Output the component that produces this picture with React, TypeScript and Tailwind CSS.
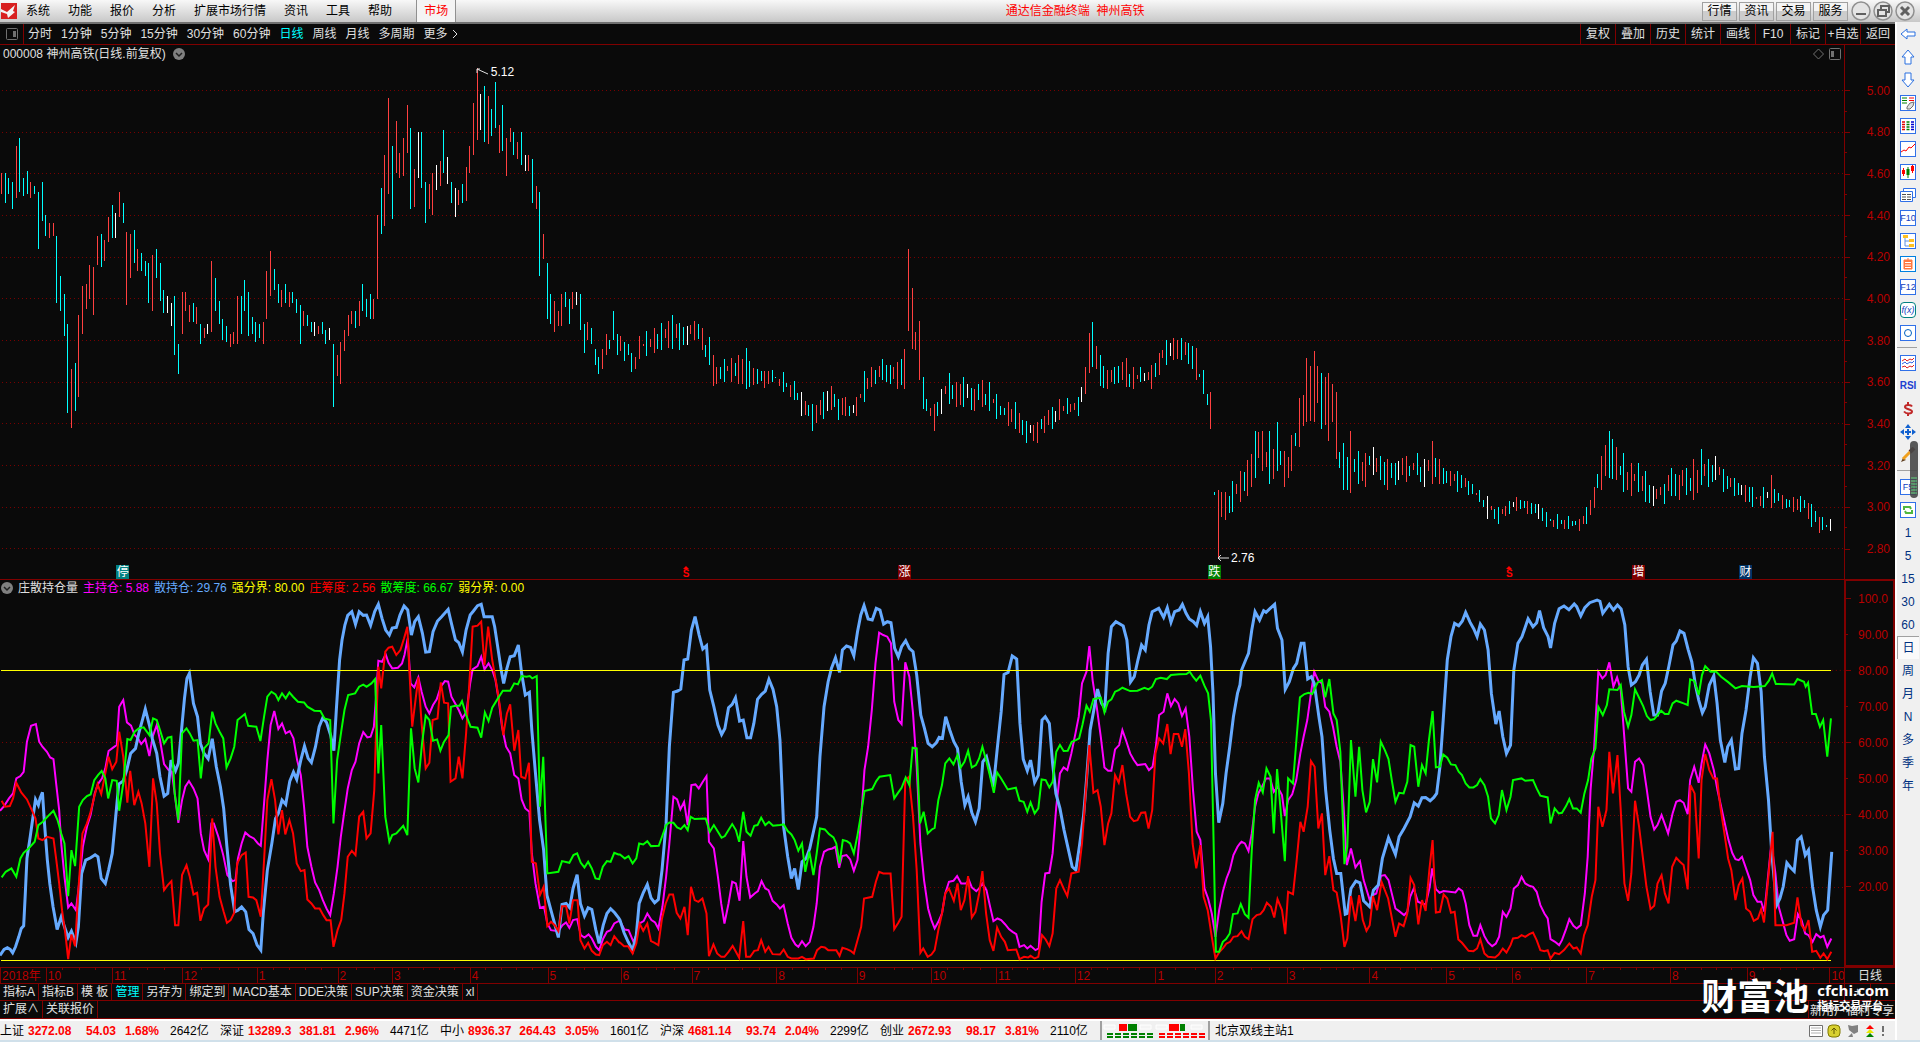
import type { ReactNode } from "react";

type Bar = { x: number; top: number; bottom: number; color: string };

const menus = ["系统", "功能", "报价", "分析", "扩展市场行情", "资讯", "工具", "帮助"];
const title_buttons = ["行情", "资讯", "交易", "服务"];
const periods = ["分时", "1分钟", "5分钟", "15分钟", "30分钟", "60分钟", "日线", "周线", "月线", "多周期"];
const chart_tools = ["复权", "叠加", "历史", "统计", "画线", "F10", "标记", "+自选", "返回"];
const price_labels = ["5.00", "4.80", "4.60", "4.40", "4.20", "4.00", "3.80", "3.60", "3.40", "3.20", "3.00", "2.80"];
const percent_labels = ["100.0", "90.00", "80.00", "70.00", "60.00", "50.00", "40.00", "30.00", "20.00"];
const sub_tabs = ["指标A", "指标B", "模 板", "管理", "另存为", "绑定到", "MACD基本", "DDE决策", "SUP决策", "资金决策", "xl"];
const side_periods = ["1", "5", "15", "30", "60", "日", "周", "月", "N", "多", "季", "年"];

const months = [
    { label: "2018年", days: 45 }, { label: "10", days: 66 }, { label: "11", days: 70 }, { label: "12", days: 75 },
    { label: "1", days: 81 }, { label: "2", days: 54 }, { label: "3", days: 78 }, { label: "4", days: 78 },
    { label: "5", days: 73 }, { label: "6", days: 71 }, { label: "7", days: 85 }, { label: "8", days: 81 },
    { label: "9", days: 74 }, { label: "10", days: 65 }, { label: "11", days: 79 }, { label: "12", days: 81 },
    { label: "1", days: 59 }, { label: "2", days: 72 }, { label: "3", days: 83 }, { label: "4", days: 77 },
    { label: "5", days: 66 }, { label: "6", days: 74 }, { label: "7", days: 84 }, { label: "8", days: 77 },
    { label: "9", days: 83 }, { label: "10", days: 13 },
];

const readings = [
    { text: "主持仓: 5.88", style: "text-[#ff00ff]" },
    { text: "散持仓: 29.76", style: "text-[#66aaff]" },
    { text: "强分界: 80.00", style: "text-[#ffff00]" },
    { text: "庄筹度: 2.56", style: "text-[#ff0000]" },
    { text: "散筹度: 66.67", style: "text-[#00ff00]" },
    { text: "弱分界: 0.00", style: "text-[#ffff00]" },
];

const indices = [
    { name: "上证", price: "3272.08", change: "54.03", rate: "1.68%", volume: "2642亿" },
    { name: "深证", price: "13289.3", change: "381.81", rate: "2.96%", volume: "4471亿" },
    { name: "中小", price: "8936.37", change: "264.43", rate: "3.05%", volume: "1601亿" },
    { name: "沪深", price: "4681.14", change: "93.74", rate: "2.04%", volume: "2299亿" },
    { name: "创业", price: "2672.93", change: "98.17", rate: "3.81%", volume: "2110亿" },
];

// one entry per trading day: r = up, c = down, w = flat, then high-low in thirds of a pixel
const first_bars = `r369-432 c369-459 c384-432 c396-477 r288-444 c264-426 c384-438 c363-432 r396-444 c408-432
c426-597 c396-513 c495-558 r519-564 r519-558 c558-759 c678-783 c732-858 c822-1089 r957-1134
c939-1083 r795-1041 r708-852 r702-777 r645-747 r651-795 r558-645 c552-651 r570-633 r501-576
c465-564 w489-564 r426-501 c459-519 r546-765 r552-684 c540-639 r597-663 c609-663 c633-678
c639-759 r615-783 c597-684 c639-753 c720-789 w738-789 w759-828 c738-915 c882-972 r726-852
r726-783 r765-816 c759-816 r771-822 c822-882 r834-864 w822-852 r633-846 c684-783 c753-822
c807-870 c828-876 r852-891 r846-882 r738-882 c738-852 c690-783 c726-858 c801-852 c816-876
c822-864 r816-882 r663-807 r603-738 c657-720 c702-759 r720-771 c702-759 r726-771 c726-759
c747-789 c765-882 r783-828 c795-828 c816-846 w816-858 r828-852 c816-852 c840-882 w834-870
c882-1071 r915-978 r876-1002 r840-903 r795-858 r783-822 c783-834 r753-828 c702-783 c747-801
c732-807 r747-807 r495-747 c414-552 r315-528 r144-432 c288-507 r213-369 r309-384 r264-378
r165-309 c234-477 r357-471 w246-384 c246-414 c396-519 r402-477 r369-495 w345-420 r333-408
c240-369 w321-402 c396-459 w414-501 r420-465 c402-459 r351-453 r288-369 r159-315 r54-270
w132-240 c108-276 r138-282 c177-258 c96-234 r225-309 c165-303 r264-378 r234-276 c246-315
r276-327 c246-345 w315-363 r315-363 c327-459 r408-477 c426-678 r552-627 c639-807 c732-822
r753-846 r783-828 r732-828 c726-771 c747-822 r726-777 w726-765 c732-840 c822-909 r816-870
c834-882 c897-945 c921-972 r897-957 r852-915 c870-897 c783-870 c852-915 r858-903 c876-933
c882-915 c909-966 r921-957 r858-927`;

// x, high, low of the trading range, thinned out to its turning points
const later_range = `523,274,293 528,270,291 534,268,288 540,264,286 546,262,284 550,257,285 556,264,286 562,266,282
568,262,278 574,268,286 578,275,298 583,290,315 590,293,312 597,292,312 603,290,314 609,284,318 612,295,316
618,301,314 625,303,317 632,302,312 640,304,320 648,311,327 656,320,340 664,330,352 672,320,342 678,315,335
685,326,343 692,324,340 700,324,340 706,303,328 713,300,316 720,293,310 728,298,314 734,296,318 738,285,318
740,245,305 743,203,270 746,235,285 750,262,310 754,308,334 762,330,352 768,318,338 774,305,330 780,312,332
788,308,332 795,318,336 802,310,332 808,312,336 815,322,342 822,328,348 830,328,350 838,344,362 846,345,362
852,340,354 858,332,350 864,326,343 872,325,338 880,324,340 886,300,322 890,272,305 893,263,300 898,290,315
905,302,318 912,300,314 920,292,316 925,300,318 932,300,312 940,298,318 946,288,306 952,278,298 958,276,294
964,276,294 970,280,297 976,284,310 982,302,322 989,320,350 992,402,404 995,400,455 998,402,422 1002,402,425
1008,393,418 1014,385,410 1020,376,405 1026,352,390 1032,352,385 1038,352,395 1043,345,385 1050,368,398
1056,355,385 1062,325,365 1068,292,345 1074,287,345 1080,305,350 1086,305,360 1090,320,375 1096,362,400
1102,352,403 1108,368,395 1114,370,398 1120,365,388 1126,372,392 1132,375,400 1140,378,396 1148,372,394
1156,370,388 1162,375,398 1170,360,395 1176,375,395 1184,385,397 1192,385,402 1200,393,404 1208,400,410
1216,405,424 1224,414,428 1232,409,420 1240,406,417 1248,409,420 1256,412,424 1264,418,430 1272,420,432
1280,421,432 1290,424,434 1296,414,428 1302,398,415 1308,372,400 1314,352,390 1320,365,392 1326,370,402
1332,378,405 1338,378,402 1344,385,410 1350,397,413 1358,395,412 1364,382,405 1370,388,408 1376,382,404
1383,375,408 1390,367,396 1396,375,398 1402,372,392 1408,383,402 1416,390,405 1424,396,410 1432,398,414
1440,398,415 1448,388,415 1456,404,416 1464,406,418 1472,405,418 1480,412,430 1486,422,435 1496,424,434`;

const RANGE_SCALE = 1.2245;
const BAR_STEP = 3.687;
const BAR_COUNT = 497;

function buildBars(): Bar[] {
    const bars: Bar[] = first_bars.split(/\s+/).map((entry, i) => {
        const [top, bottom] = entry.slice(1).split("-").map(Number);
        return { x: 1.5 + i * BAR_STEP, top, bottom, color: entry[0] };
    });

    const knots = later_range.split(/\s+/).map((k) => k.split(",").map(Number));
    for (let i = bars.length; i < BAR_COUNT; i++) {
        const x = 1.5 + i * BAR_STEP;
        const rx = x / RANGE_SCALE;
        const found = knots.findIndex((n) => n[0] > rx);
        const k = found < 0 ? knots.length - 1 : Math.max(1, found);
        const [a, b] = [knots[k - 1], knots[k]];
        const nearest = rx - a[0] < b[0] - rx ? a : b;
        const snap = Math.abs(rx - nearest[0]) <= 1.5;
        const t = Math.min(1, Math.max(0, (rx - a[0]) / (b[0] - a[0])));
        const hi = snap ? nearest[1] : a[1] + (b[1] - a[1]) * t;
        const lo = snap ? nearest[2] : a[2] + (b[2] - a[2]) * t;
        const range = lo - hi;
        const cutTop = snap ? 0 : (((i * 37) % 19) / 19) * 0.5 * range;
        const cutBottom = snap ? 0 : (((i * 53) % 23) / 23) * 0.5 * range;
        const roll = (i * 71) % 31;
        const falling = b[1] > a[1];
        let color = roll < 3 && range < 24 ? "w" : roll < (falling ? 11 : 21) ? "r" : "c";
        if (range > 48) color = "r";
        bars.push({
            x,
            top: ((hi + cutTop) * RANGE_SCALE - 50) * 3,
            bottom: ((lo - cutBottom) * RANGE_SCALE - 50) * 3,
            color,
        });
    }
    return bars;
}

const bars = buildBars();

function barPath(color: string) {
    return bars
        .filter((b) => b.color === color)
        .map((b) => `M${Math.floor(b.x) + 0.5} ${Math.round(b.top)}V${Math.round(b.bottom)}`)
        .join("");
}

// each curve is kept in three stretches, one for each third of the time axis
const stretches = [
    { offset: 0, ratio: 1 },
    { offset: 1519, ratio: 1 },
    { offset: 3038, ratio: 0.9687 },
];

function joinCurve(parts: string[]) {
    return parts
        .map((part, i) =>
            part.trim().split(/\s+/).map((p) => {
                const [x, y] = p.split(",").map(Number);
                return `${Math.round(x * stretches[i].ratio + stretches[i].offset)},${y}`;
            }).join(" "))
        .join(" ");
}

const blue_curve = joinCurve([
    `0,1186 10,1168 18,1163 25,1168 31,1178 38,1160 46,1130 52,1105 58,1097 62,1000 66,895 74,830 82,760 87,718 94,735 98,715 104,697 109,790 116,900 122,970 130,1040 140,1108 150,1070 158,1100 167,1132 175,1113 186,1148 192,1100 200,940 210,900 222,893 233,884 240,890 248,955 258,970 266,930 275,880 285,750 291,672 302,663 311,628 320,580 332,565 340,520 350,475 356,447 366,495 373,535 384,580 392,650 402,708 411,700 419,600 430,632 437,610 444,520 452,415 458,355 464,340 474,430 484,470 491,550 500,580 510,596 520,536 530,620 540,680 548,745 556,860 565,975 575,1055 583,1050 592,1040 602,1055 610,1108 620,1120 630,1155 639,1170 645,1060 655,930 666,850 675,775 682,760 691,720 700,733 710,663 719,636 727,658 737,600 746,558 755,595 763,607 773,560 782,500 791,473 800,487 810,525 818,572 824,450 832,300 838,240 845,195 852,166 862,155 871,193 880,155 890,166 898,165 908,196 918,155 927,133 936,175 945,210 954,225 961,204 971,202 980,165 990,138 999,150 1008,225 1016,185 1025,170 1035,220 1043,276 1052,275 1061,215 1072,183 1082,170 1098,148 1106,190 1116,240 1124,248 1133,276 1142,210 1152,165 1160,153 1170,137 1179,133 1186,170 1206,170 1212,200 1220,265 1228,330 1234,370 1242,325 1250,290 1260,287 1270,255 1278,340 1287,405 1297,397 1303,510 1312,640 1322,780 1332,870 1340,1005 1352,1060 1368,1132 1377,1033 1387,1030 1396,1043 1404,985 1414,944 1422,1030 1432,1067 1441,1043 1450,1048 1460,1110 1468,1150 1478,1095 1487,1060 1496,1046 1506,1058 1516,1074`,
    `0,1080 10,1118 20,1145 31,1170 40,1125 47,1030 57,998 67,973 76,1013 85,1028 94,1018 103,930 113,790 121,560 131,397 141,393 149,387 157,300 166,297 175,210 184,170 194,225 203,267 212,257 220,390 230,440 240,495 249,523 257,505 266,443 275,433 283,413 293,483 302,480 311,533 320,533 328,490 337,418 347,403 356,393 365,358 375,388 384,440 392,540 401,800 411,890 420,955 428,925 437,988 446,905 456,895 465,865 474,815 482,770 490,590 500,440 510,365 518,325 528,293 538,337 545,270 555,258 565,262 573,287 582,215 590,165 598,137 608,177 618,180 628,145 637,150 646,192 655,185 664,188 673,265 682,290 690,260 700,242 709,265 718,275 727,345 737,465 746,505 755,550 765,560 775,548 782,532 790,535 798,470 808,510 818,545 827,565 836,665 845,735 853,710 862,757 871,785 880,745 889,605 898,590 906,630 915,680 924,570 934,455 941,343 951,337 961,288 972,297 980,490 988,597 998,632 1006,600 1016,667 1025,645 1034,480 1042,470 1052,490 1060,610 1068,700 1078,745 1088,810 1098,865 1108,920 1117,930 1126,855 1136,765 1143,660 1152,510 1161,450 1170,387 1180,430 1188,445 1196,280 1204,200 1215,185 1225,192 1233,198 1242,240 1251,366 1260,350 1269,300 1278,255 1287,270 1296,195 1304,155 1320,145 1332,172 1341,143 1350,187 1359,155 1370,150 1378,133 1387,160 1395,177 1405,185 1413,196 1422,155 1432,190 1440,170 1447,260 1453,400 1459,640 1467,788 1477,730 1485,640 1494,560 1503,470 1513,400`,
    `0,375 4,330 14,300 22,280 30,210 38,155 50,180 60,152 66,157 76,145 88,133 95,205 106,240 115,388 125,365 135,325 144,310 155,250 162,250 171,357 181,350 188,370 200,475 208,530 217,690 227,810 236,895 245,940 255,940 266,1062 272,1060 281,985 293,963 303,968 313,1022 328,1040 338,990 350,975 360,895 376,833 393,883 403,830 415,805 430,770 441,728 451,738 460,713 470,712 481,722 490,712 498,700 506,620 514,480 524,300 534,230 543,190 553,197 563,183 571,157 582,187 592,207 600,230 608,192 618,210 628,270 636,400 647,492 656,453 665,530 674,580 684,555 693,330 703,250 713,230 729,176 741,200 750,188 758,152 768,203 779,230 786,264 796,190 807,146 820,138 832,149 845,132 852,140 862,168 872,143 885,128 903,120 910,124 918,160 934,133 945,150 955,135 964,147 973,195 982,320 990,375 1000,365 1010,345 1018,315 1028,298 1037,395 1047,465 1056,465 1066,393 1076,370 1085,318 1095,255 1104,243 1113,213 1123,220 1133,268 1143,305 1152,375 1160,420 1170,458 1177,440 1187,375 1198,347 1207,430 1215,540 1226,607 1234,560 1243,540 1253,627 1262,625 1270,520 1280,450 1290,350 1299,293 1309,310 1318,395 1327,590 1337,720 1345,880 1357,1035 1366,1015 1374,980 1383,908 1393,922 1402,933 1410,840 1419,830 1430,885 1438,870 1448,980 1458,1050 1468,1100 1476,1065 1487,1050 1492,960 1497,875`,
]);

const magenta_curve = joinCurve([
    `0,752 10,738 22,715 32,700 40,655 50,648 58,635 66,545 76,497 88,492 96,545 104,560 115,575 123,592 131,597 138,675 145,750 150,850 158,950 167,1042 175,1030 186,1050 193,980 203,860 213,800 222,765 232,700 240,672 250,655 258,625 266,573 278,562 286,555 292,440 302,420 311,487 321,497 330,525 338,535 346,552 356,537 366,588 374,530 384,495 392,540 402,612 413,630 421,635 428,700 437,788 446,720 454,680 463,663 474,685 484,715 492,820 500,870 510,897 518,790 524,790 535,830 547,885 557,945 570,963 577,960 583,895 592,850 601,817 611,828 622,835 632,850 639,857 647,730 655,600 663,495 672,453 682,507 691,490 700,520 710,513 719,535 728,600 737,645 745,740 753,860 763,920 772,967 782,990 791,1020 800,1045 809,1065 818,1000 827,920 835,830 843,760 852,685 862,630 871,605 880,550 890,516 900,532 908,530 916,500 922,400 927,302 936,305 945,283 952,308 961,325 975,323 985,310 991,285 999,235 1006,370 1015,382 1025,352 1033,395 1043,440 1052,460 1061,435 1070,418 1080,380 1090,363 1098,365 1106,410 1116,432 1124,450 1133,475 1143,455 1152,370 1158,328 1170,318 1179,290 1187,328 1197,310 1206,330 1214,360 1222,420 1230,500 1240,560 1250,580 1260,645 1270,655 1278,718 1287,745 1297,755 1303,880 1312,970 1323,1043 1333,1040 1341,1090 1350,1110 1368,1113 1378,1095 1387,1087 1395,1103 1404,1080 1414,1077 1423,1125 1432,1132 1442,1123 1450,1135 1460,1160 1468,1170 1478,1135 1487,1115 1496,1110 1505,1090 1515,1083`,
    `0,1083 11,1108 21,1110 33,1145 40,1125 48,1090 58,1083 67,1060 77,1080 86,1087 94,1105 104,1040 113,950 121,850 131,710 140,718 148,748 157,726 166,795 175,675 185,673 193,685 203,665 212,648 218,845 230,865 240,950 248,1030 256,1090 266,1030 275,965 284,970 293,1022 302,843 310,950 319,1012 330,1000 338,993 347,963 356,985 364,990 374,1022 384,1033 392,1045 401,1035 411,1090 420,1133 430,1153 437,1160 446,1143 455,1158 465,1145 474,1100 482,1030 490,920 500,875 510,868 520,865 528,860 537,923 544,888 555,885 564,898 573,932 582,900 590,790 599,630 608,560 617,450 626,310 635,218 645,225 655,230 664,250 672,425 682,480 690,492 699,307 709,350 718,460 727,620 736,850 745,960 755,1045 763,1080 771,1105 780,1085 789,1060 797,1000 806,965 817,962 826,948 836,970 848,970 855,960 862,982 873,993 880,985 888,970 898,990 906,1035 915,1083 925,1075 934,1080 944,1093 953,1107 962,1115 971,1122 979,1160 990,1155 998,1165 1006,1157 1018,1170 1026,1165 1033,1025 1042,940 1052,938 1060,880 1069,740 1078,640 1087,622 1096,630 1106,580 1116,520 1124,470 1132,370 1143,335 1150,258 1158,360 1168,440 1178,530 1187,622 1196,632 1204,632 1213,568 1223,555 1231,510 1241,545 1250,580 1259,600 1268,615 1287,612 1296,630 1305,620 1313,560 1321,465 1332,455 1341,400 1350,438 1359,417 1368,430 1377,468 1386,445 1395,530 1404,690 1413,815 1422,840 1432,985 1441,1015 1450,1060 1459,1130 1468,1050 1477,995 1486,955 1494,930 1503,885 1513,860`,
    `0,850 4,845 12,850 22,873 30,820 38,740 46,700 56,680 66,655 76,655 86,695 95,680 106,705 114,768 122,720 132,703 142,660 153,580 161,530 170,480 180,400 188,335 198,362 208,370 216,440 226,455 235,500 245,560 254,605 262,740 270,915 281,865 292,922 303,903 313,960 328,1020 337,1005 345,1000 357,947 366,945 376,960 393,1045 403,1053 415,1065 423,1055 430,1010 440,985 450,1025 460,1030 470,1033 480,980 486,925 496,987 505,998 515,993 545,997 553,985 563,993 571,1030 580,1095 590,1127 600,1127 608,1095 618,1128 628,1147 638,1158 647,1150 656,1130 665,1055 674,1070 684,1045 693,985 703,975 712,950 722,970 732,977 741,980 750,995 760,1035 770,1060 778,1075 786,1137 797,1145 807,1155 815,1140 825,1107 833,1077 843,1097 852,1105 862,1095 872,1000 880,890 887,690 896,560 906,335 917,355 925,345 934,307 945,380 954,352 963,390 971,520 982,685 990,695 999,605 1010,595 1020,615 1029,690 1038,770 1048,808 1056,795 1066,765 1076,795 1083,820 1094,760 1104,725 1113,720 1122,728 1132,762 1139,660 1149,620 1160,668 1168,610 1177,553 1187,580 1198,630 1208,690 1217,740 1226,790 1236,840 1245,878 1253,897 1262,900 1270,890 1280,925 1290,960 1299,1005 1309,1025 1318,1025 1327,1055 1335,960 1344,850 1354,940 1363,1040 1372,1080 1382,1125 1391,1142 1402,1137 1411,1062 1420,1080 1430,1120 1438,1125 1448,1145 1458,1122 1468,1132 1476,1127 1486,1160 1496,1135`,
]);

const red_curve = joinCurve([
    `4,722 12,740 24,738 32,715 40,668 52,697 66,718 76,745 87,775 94,835 104,840 116,830 131,835 138,900 145,970 152,1050 160,1120 167,1197 175,1123 184,1158 192,990 202,820 213,790 221,760 230,715 239,672 248,702 258,640 266,590 275,627 285,605 292,515 302,590 312,728 319,632 329,735 339,695 347,730 356,790 366,920 375,655 384,730 392,880 402,990 411,975 420,963 429,1095 437,1095 446,945 457,915 465,950 474,1003 483,998 491,1082 500,1045 510,1033 520,775 528,920 538,1010 548,1055 556,1088 565,1080 574,1058 581,910 592,885 602,877 609,1010 620,1012 628,1020 639,1070 647,900 655,720 665,657 674,720 682,823 691,750 699,823 709,780 718,820 727,910 737,933 746,930 753,1018 763,1030 772,1045 783,1045 792,1065 800,1080 810,1080 817,1160 827,1110 836,1080 844,1000 852,890 862,872 871,885 880,770 890,755 898,835 908,820 917,690 922,490 927,320 934,385 944,275 952,263 961,260 971,285 981,270 990,235 998,200 1003,330 1010,500 1018,420 1025,352 1033,490 1043,625 1052,608 1060,480 1072,475 1080,367 1088,428 1098,430 1104,665 1116,655 1124,590 1133,655 1142,520 1152,330 1158,200 1170,197 1179,185 1187,315 1196,200 1206,300 1216,370 1225,440 1233,525 1242,460 1250,433 1260,572 1270,510 1277,650 1287,655 1296,608 1303,905 1313,910 1323,1005 1332,980 1341,1098 1350,1085 1359,1095 1368,1113 1377,1038 1387,1038 1395,1090 1404,1020 1415,1020 1422,1140 1432,1165 1441,1148 1450,1172 1460,1183 1468,1185 1477,1155 1487,1145 1496,1155 1505,1128 1517,1147`,
    `0,1147 10,1158 20,1158 31,1180 40,1150 48,1090 57,1112 67,1090 76,1143 85,1148 94,1155 103,1075 112,1030 121,1003 130,1003 139,1058 148,1075 158,1040 166,1125 174,980 183,1020 192,1025 202,1015 212,1060 218,1188 229,1153 238,1180 248,1190 256,1190 266,1175 276,1157 284,1175 292,1193 302,1083 309,1190 319,1190 329,1172 338,1170 346,1140 356,1175 364,1160 374,1182 392,1183 401,1168 411,1190 420,1195 437,1195 446,1190 455,1197 475,1195 483,1170 493,1160 502,1162 510,1170 530,1170 538,1187 545,1163 556,1167 565,1172 573,1180 582,1140 591,1100 598,1015 618,1010 627,965 635,935 645,940 663,940 672,1107 682,1088 690,1070 699,660 708,650 718,770 727,930 736,1178 743,1165 754,1190 763,1183 771,1170 780,1110 789,1060 797,1000 806,985 818,1022 827,970 835,1050 844,1020 853,948 862,1072 871,1055 880,1000 888,933 897,1060 906,1140 915,1172 924,1102 934,1130 943,1145 950,1170 971,1168 979,1197 990,1190 1000,1192 1006,1187 1016,1195 1025,1190 1034,1125 1043,1138 1052,1158 1060,1120 1069,985 1078,960 1087,985 1096,1008 1106,940 1124,935 1132,850 1141,700 1150,555 1160,698 1170,690 1178,740 1187,855 1196,790 1204,760 1213,645 1222,668 1231,615 1240,700 1250,770 1259,783 1268,780 1277,758 1287,757 1295,805 1304,750 1312,580 1321,535 1331,550 1341,492 1349,582 1357,522 1368,522 1377,560 1385,507 1394,640 1403,850 1412,925 1422,855 1430,1010 1440,1050 1450,1130 1459,1195 1469,1175 1478,1163 1486,1150 1495,1145 1503,1130 1513,1128`,
    `4,1113 12,1130 22,1137 32,1077 42,1065 52,1062 60,1050 68,1028 78,1040 87,1072 95,1017 106,1050 115,1122 122,995 134,1002 144,900 153,785 161,815 171,740 180,603 189,620 198,805 207,760 216,945 226,888 236,990 245,997 254,1060 264,1160 272,1135 281,1008 292,1083 301,1005 311,1080 320,1112 328,1095 337,1008 347,1050 358,965 375,1015 393,1130 403,1090 414,1098 423,1060 431,953 441,975 451,1093 460,1020 470,1052 479,930 487,840 496,1057 506,1055 515,1003 524,1015 534,1058 543,1055 552,1138 562,1148 578,1172 590,1173 600,1165 608,1138 618,1180 628,1190 645,1192 655,1183 665,1165 674,1177 684,1155 691,1135 703,1133 712,1125 722,1130 732,1122 741,1117 750,1140 760,1170 770,1173 778,1170 786,1195 796,1178 807,1182 820,1170 833,1150 843,1165 852,1162 862,1180 870,1125 880,1095 890,1010 899,960 906,740 917,800 927,750 934,575 944,700 955,585 963,750 972,970 982,1022 990,940 999,722 1010,800 1020,900 1028,980 1038,1047 1048,1037 1056,970 1066,945 1075,1000 1084,1030 1093,920 1104,893 1113,905 1122,915 1132,988 1140,675 1150,700 1160,895 1168,660 1177,582 1187,630 1197,655 1207,655 1215,740 1225,820 1235,895 1243,930 1253,1020 1262,975 1271,955 1280,1045 1290,1055 1300,1082 1310,1075 1318,1047 1326,1087 1336,960 1347,815 1354,1095 1382,1095 1402,1088 1410,1012 1420,1095 1429,1110 1438,1080 1447,1175 1458,1172 1468,1193 1476,1180 1486,1197 1496,1175`,
]);

const green_curve = joinCurve([
    `4,952 14,935 28,925 40,950 50,895 58,878 70,865 85,845 94,795 105,785 120,765 131,752 141,780 150,820 158,850 167,1008 175,870 184,918 194,740 203,720 213,708 222,703 231,660 240,645 249,633 258,655 265,715 275,660 286,662 292,752 302,670 312,537 320,540 330,515 340,505 352,502 366,525 375,475 384,480 392,510 402,550 411,533 420,530 428,700 437,780 446,520 457,505 465,520 474,542 484,540 492,655 500,565 511,550 520,455 528,490 538,515 547,535 555,622 565,595 574,560 582,480 592,470 600,462 608,497 628,500 638,543 647,470 655,410 665,395 675,403 682,420 691,400 700,415 709,397 718,410 730,425 745,427 753,440 770,452 785,453 795,475 809,480 817,790 826,600 836,515 844,450 853,405 870,400 880,380 890,374 898,380 910,370 919,357 927,640 934,495 944,770 954,845 961,825 971,820 988,797 998,825 1007,505 1016,625 1025,667 1034,550 1043,467 1052,480 1061,542 1071,538 1079,572 1088,545 1099,525 1105,440 1116,437 1126,437 1132,423 1142,465 1153,500 1170,503 1179,533 1188,457 1197,483 1206,443 1220,415 1232,392 1250,392 1260,370 1269,373 1278,348 1290,350 1298,348 1304,355 1315,348 1323,740 1331,590 1341,940 1368,935 1377,903 1395,908 1405,885 1414,880 1423,908 1432,922 1441,905 1450,925 1459,955 1468,957 1477,920 1487,903 1496,905 1505,878 1515,883`,
    `0,883 12,895 21,888 31,910 40,895 47,850 57,853 67,843 76,858 95,857 103,830 113,795 121,787 131,788 140,802 149,807 158,795 166,810 173,770 183,777 210,775 220,815 230,795 240,815 249,833 257,828 266,810 275,792 284,810 292,845 302,755 310,815 320,827 329,797 337,795 346,773 356,795 365,785 375,797 392,795 401,793 411,813 420,823 428,840 437,872 446,850 454,935 464,875 474,945 482,880 490,805 502,808 512,822 523,832 530,850 538,910 546,840 556,843 564,850 573,880 582,825 591,760 599,693 618,687 628,663 636,650 662,645 672,715 682,697 690,683 700,652 709,675 717,563 727,565 735,790 744,755 754,820 764,808 771,803 780,720 789,675 797,610 807,595 817,613 827,585 835,622 844,605 853,572 862,622 872,615 880,595 888,560 897,600 906,645 916,698 924,637 934,655 950,688 970,683 979,722 989,725 998,755 1006,727 1016,760 1025,745 1033,658 1043,660 1052,682 1060,665 1069,575 1078,555 1087,573 1097,572 1107,545 1117,540 1125,535 1133,495 1143,437 1151,455 1160,417 1178,413 1187,457 1196,425 1204,418 1213,395 1222,390 1231,383 1250,393 1268,392 1285,383 1295,388 1304,380 1313,357 1325,353 1340,357 1350,345 1370,343 1388,342 1396,335 1404,350 1412,362 1422,347 1432,377 1441,400 1448,480 1453,760 1460,1175 1468,1175 1477,1145 1485,1137 1494,1120 1502,1062 1513,1060`,
    `2,1032 12,1062 22,1073 30,870 38,720 48,668 58,697 67,625 77,650 86,820 94,627 104,770 114,903 122,655 134,670 143,530 152,412 163,402 173,398 183,402 196,368 207,360 216,412 226,357 236,460 245,480 254,575 264,912 272,860 281,540 292,710 301,560 310,690 319,757 328,725 337,597 347,667 356,545 366,570 376,597 384,660 393,725 403,698 414,700 423,665 431,555 441,560 451,680 460,615 470,640 478,540 487,453 496,622 506,620 514,583 524,593 534,613 545,615 553,635 562,645 571,670 580,682 590,682 600,675 608,657 618,675 628,710 635,775 645,790 655,765 663,690 674,750 684,710 691,660 712,655 722,662 741,660 750,685 760,707 778,712 786,790 796,745 806,760 815,758 825,738 833,717 842,745 852,745 862,758 871,700 881,660 889,595 899,565 906,440 918,465 928,435 934,388 955,390 963,375 971,455 982,500 990,465 999,388 1010,413 1020,438 1029,468 1038,480 1048,477 1065,452 1075,462 1084,462 1094,430 1104,422 1122,430 1132,435 1139,358 1149,362 1160,405 1169,345 1177,318 1190,335 1205,335 1217,350 1236,367 1253,385 1270,378 1300,381 1328,378 1338,362 1346,340 1355,372 1402,373 1410,357 1427,365 1431,380 1437,368 1447,462 1457,462 1467,500 1475,480 1486,590 1495,475`,
]);

function ToggleDot() {
    return <svg viewBox="0 0 12 12" className="size-3 shrink-0">
        <circle cx="6" cy="6" r="6" fill="#808080" />
        <path d="M3 5l3 3 3-3" fill="none" stroke="#202020" strokeWidth="1.5" />
    </svg>;
}

function TitleBar() {
    return <header className="flex h-[22px] items-center bg-linear-to-b from-[#f8f8f8] to-[#c8c8c8] text-black">
        <svg viewBox="0 0 16 16" className="mr-[9px] ml-px size-4 shrink-0">
            <rect width="16" height="16" fill="#d82020" />
            <path d="M0 6l6 3 8-7-2 6 2 1-7 6-1-4-6-2z" fill="#f4f4f4" />
        </svg>
        <nav className="flex h-full items-center gap-[18px]">
            {menus.map((m) => <button key={m} className="leading-4 whitespace-nowrap">{m}</button>)}
        </nav>
        <button className="ml-6 h-full border-x border-[#909090] bg-[#f4f4f4] px-[7px] text-[#ff0000]">市场</button>
        <h1 className="flex-1 pr-2 text-center whitespace-pre text-[#ff0000]">通达信金融终端  神州高铁</h1>
        <div className="flex gap-[2px]">
            {title_buttons.map((b) => (
                <button key={b} className="h-[19px] w-[35px] border border-[#a0a0a0] bg-linear-to-b from-[#f4f4f4] from-50% to-[#cccccc] to-50% leading-4">{b}</button>
            ))}
        </div>
        <div className="flex gap-[2px] pr-[5px] pl-[3px]">
            <WindowButton label="最小化"><path d="M5 13h10" strokeWidth="2" /></WindowButton>
            <WindowButton label="还原"><path d="M8 8V5h8v6h-3M5 9h8v6H5z" strokeWidth="2" /></WindowButton>
            <WindowButton label="关闭"><path d="M6 6l8 8M14 6l-8 8" strokeWidth="3" /></WindowButton>
        </div>
    </header>;
}

function WindowButton({ label, children }: { label: string; children: ReactNode }) {
    return <button aria-label={label}>
        <svg viewBox="0 0 20 20" className="size-5" fill="none" stroke="#606060">
            <circle cx="10" cy="10" r="9" fill="#e4e4e4" stroke="#909090" strokeWidth="1.5" />
            {children}
        </svg>
    </button>;
}

function PeriodBar() {
    return <div className="flex h-[21px] items-stretch border-b border-[#800000] text-[#e0e0e0]">
        <button aria-label="侧栏" className="flex w-6 items-center justify-center border-r border-[#800000]">
            <svg viewBox="0 0 12 12" className="size-3">
                <rect x="0.5" y="0.5" width="11" height="11" rx="1" fill="none" stroke="#707070" />
                <path d="M7 3h3v6H7z" fill="#707070" />
            </svg>
        </button>
        <nav className="flex flex-1 items-center gap-[9px] pl-1 whitespace-nowrap">
            {periods.map((p) => (
                <button key={p} className={p === "日线" ? "text-[#00ffff]" : ""}>{p}</button>
            ))}
            <button className="flex items-center gap-1">
                更多
                <svg viewBox="0 0 6 10" className="h-[10px] w-[6px]"><path d="M1 1l4 4-4 4" fill="none" stroke="#e0e0e0" /></svg>
            </button>
        </nav>
        {chart_tools.map((t) => (
            <button key={t} className="w-[35px] border-l border-[#800000] text-center whitespace-nowrap">{t}</button>
        ))}
    </div>;
}

function Badge({ x, style, children }: { x: number; style: string; children: ReactNode }) {
    return <span className={`absolute bottom-0 flex h-[14px] w-[13px] items-center justify-center ${style}`} style={{ left: `${x}%` }}>{children}</span>;
}

function DollarMark() {
    return <span className="flex flex-col items-center text-[10px] leading-[9px] font-bold text-[#ff0000]">
        <svg viewBox="0 0 6 3" className="h-[3px] w-[6px]"><path d="M0 3l3-3 3 3z" fill="#ff0000" /></svg>
        S
    </span>;
}

function Axis({ labels, halfTicks, frame }: { labels: string[]; halfTicks?: boolean; frame: string }) {
    return <div className={`flex w-[51px] shrink-0 flex-col text-[#b80000] ${frame}`}>
        {labels.map((label, i) => (
            <div key={label} className="relative flex flex-1 items-center justify-between pr-[5px]">
                <i className={`h-px bg-[#800000] ${!halfTicks && i % 2 ? "w-[2px]" : "w-[5px]"}`} />
                {label}
                {halfTicks && i < labels.length - 1 && <i className="absolute bottom-0 left-0 h-px w-[2px] bg-[#800000]" />}
            </div>
        ))}
    </div>;
}

function CandleChart() {
    return <section className="flex flex-[535] basis-0">
        <div className="relative flex-1">
            <svg viewBox="0 -15 1844 1602" preserveAspectRatio="none" className="absolute inset-0 size-full" shapeRendering="crispEdges">
                {price_labels.map((label, i) => (
                    <path key={label} d={`M2 ${122 + i * 125}H1844`} stroke="#780000" strokeDasharray="1 3" vectorEffect="non-scaling-stroke" />
                ))}
                <path d={barPath("r")} stroke="#ff4040" vectorEffect="non-scaling-stroke" />
                <path d={barPath("c")} stroke="#00ffff" vectorEffect="non-scaling-stroke" />
                <path d={barPath("w")} stroke="#ffffff" vectorEffect="non-scaling-stroke" />
            </svg>
            <div className="relative flex h-[18px] items-center gap-[7px] pr-[3px] pl-[3px] text-[#e0e0e0]">
                <h2>000008 神州高铁(日线.前复权)</h2>
                <ToggleDot />
                <svg viewBox="0 0 28 12" className="ml-auto h-3 w-7" fill="none" stroke="#707070">
                    <path d="M5.500 1l5 5-5 5-5-5z" />
                    <rect x="16.500" y="0.500" width="11" height="11" rx="1" />
                    <path d="M18 3h3v6h-3z" fill="#707070" stroke="none" />
                </svg>
            </div>
            <p className="absolute top-[4%] left-[25.8%] flex items-center gap-[2px] leading-3">
                <svg viewBox="0 0 13 8" className="h-2 w-[13px]" fill="none" stroke="#e0e0e0"><path d="M4 1H1v4M1 1l11 5" /></svg>
                5.12
            </p>
            <p className="absolute top-[95%] left-[66%] flex items-center gap-[2px] leading-3">
                <svg viewBox="0 0 12 8" className="h-2 w-3" fill="none" stroke="#e0e0e0"><path d="M12 4H1M4 1L1 4l3 3" /></svg>
                2.76
            </p>
            <Badge x={6.3} style="bg-[#008080]">停</Badge>
            <Badge x={36.85} style=""><DollarMark /></Badge>
            <Badge x={48.7} style="bg-[#800000]">涨</Badge>
            <Badge x={65.5} style="bg-[#008000]">跌</Badge>
            <Badge x={81.5} style=""><DollarMark /></Badge>
            <Badge x={88.5} style="bg-[#800000]">增</Badge>
            <Badge x={94.3} style="bg-[#003366]">财</Badge>
        </div>
        <Axis labels={price_labels} halfTicks frame="border-l border-[#800000] pt-[25px] pb-[9px]" />
    </section>;
}

function HoldingsChart() {
    return <section className="flex flex-[388] basis-0 border-t border-[#800000]">
        <div className="relative flex-1">
            <svg viewBox="0 60 4518 1161" preserveAspectRatio="none" className="absolute inset-0 size-full" fill="none">
                {[547, 766, 982].map((y) => (
                    <path key={y} d={`M4 ${y}H4518`} stroke="#780000" strokeDasharray="1 3" vectorEffect="non-scaling-stroke" shapeRendering="crispEdges" />
                ))}
                <path d="M4488 331H4518" stroke="#780000" strokeDasharray="1 3" vectorEffect="non-scaling-stroke" />
                <polyline points={magenta_curve} stroke="#ff00ff" strokeWidth="2" vectorEffect="non-scaling-stroke" />
                <polyline points={blue_curve} stroke="#66aaff" strokeWidth="3" vectorEffect="non-scaling-stroke" />
                <path d="M2 331.500H4486M2 1201.500H4486" stroke="#ffff00" vectorEffect="non-scaling-stroke" shapeRendering="crispEdges" />
                <polyline points={red_curve} stroke="#ff0000" strokeWidth="2" vectorEffect="non-scaling-stroke" />
                <polyline points={green_curve} stroke="#00ff00" strokeWidth="2" vectorEffect="non-scaling-stroke" />
            </svg>
            <div className="relative flex h-4 items-center gap-[5px] pl-px whitespace-nowrap">
                <ToggleDot />
                <h2 className="text-[#e0e0e0]">庄散持仓量</h2>
                {readings.map((r) => <span key={r.text} className={r.style}>{r.text}</span>)}
            </div>
        </div>
        <Axis labels={percent_labels} frame="border-2 border-t border-[#800000] pb-[60px]" />
    </section>;
}

function MonthAxis() {
    return <div className="flex h-4 border-t border-[#800000] text-[#b80000]">
        <div className="flex flex-1">
            {months.map((m, i) => (
                <div key={i} className="relative basis-0 overflow-hidden border-l border-[#800000] pl-px leading-4 whitespace-nowrap" style={{ flexGrow: m.days }}>
                    {m.label}
                    <span className="absolute inset-x-0 top-0 flex justify-evenly">
                        {i > 0 && Array.from({ length: Math.max(0, Math.round(m.days / 17) - 1) }, (_, k) => (
                            <i key={k} className="h-[2px] w-px bg-[#800000]" />
                        ))}
                    </span>
                </div>
            ))}
        </div>
        <button className="w-[51px] border-l border-[#800000] text-center leading-4 text-[#e0e0e0]">日线</button>
    </div>;
}

function BottomTabs() {
    return <div className="relative text-[#e0e0e0]">
        <div className="flex h-[18px] border-y border-[#800000] leading-4 whitespace-nowrap">
            {sub_tabs.map((t) => (
                <button key={t} className={`border-r border-[#800000] px-[3px] ${t === "管理" ? "text-[#00ffff]" : ""}`}>{t}</button>
            ))}
            <span className="flex-1" />
            <button className="w-[26px] border-l border-[#800000] text-center">+</button>
            <span className="w-[25px] border-l border-[#800000]" />
        </div>
        <div className="flex h-[18px] border-b border-[#800000] leading-[17px] whitespace-nowrap">
            <button className="border-r border-[#800000] px-[3px]">扩展∧</button>
            <button className="border-r border-[#800000] px-[3px]">关联报价</button>
            <span className="flex-1" />
            <a href="#benefits" className="border-l border-[#800000] px-px leading-5">新用户福利专享</a>
        </div>
        <div className="pointer-events-none absolute right-[6px] bottom-[2px] flex items-end gap-2 font-bold whitespace-nowrap text-white">
            <span className="text-[36px] leading-[38px]">财富池</span>
            <span className="flex flex-col pb-1">
                <span className="font-['Open_Sans',sans-serif] text-[15px] leading-[18px]">cfchi.com</span>
                <span className="text-[11px] leading-[14px]">指标交易平台</span>
            </span>
        </div>
    </div>;
}

function SignalBars() {
    return <svg viewBox="0 0 104 16" className="h-4 w-[104px] shrink-0">
        <path d="M1 2h11v4H1zM37 2h11v4H37zM53 2h11v4H53zM88 2h11v4H88z" fill="#f4f4f4" stroke="#ffffff" />
        <path d="M16 1h8v7h-8zM66 1h10v7H66z" fill="#ff0000" />
        <path d="M25 1h9v7h-9zM77 1h5v7h-5z" fill="#008000" />
        <path d="M4 11h46M4 14h46" stroke="#008000" strokeWidth="2" strokeDasharray="6 2" />
        <path d="M56 11h46M56 14h46" stroke="#ff0000" strokeWidth="2" strokeDasharray="6 2" />
    </svg>;
}

function StatusBar() {
    return <footer className="flex h-[21px] items-center border-t-2 border-white bg-[#f0f0f0] whitespace-nowrap text-black">
        {indices.map((n) => (
            <div key={n.name} className="grid grid-cols-[28px_48px_40px_54px_50px]">
                <span>{n.name}</span>
                <b className="text-[#ff0000]">{n.price}</b>
                <b className="text-right text-[#ff0000]">{n.change}</b>
                <b className="pl-[9px] text-[#ff0000]">{n.rate}</b>
                <span>{n.volume}</span>
            </div>
        ))}
        <div className="flex h-full items-center border-x-2 border-[#a0a0a0] px-px">
            <SignalBars />
        </div>
        <span className="pl-[5px]">北京双线主站1</span>
        <svg viewBox="0 0 78 14" className="mr-2 ml-auto h-[14px] w-[78px] shrink-0">
            <path d="M0.500 1.500h13v11h-13z" fill="#ffffff" stroke="#707070" />
            <path d="M2 4h10M2 6.500h10M2 9h10" stroke="#b0b0b0" />
            <rect x="19" y="1" width="12" height="12" rx="4" fill="#d8d030" stroke="#807800" />
            <path d="M25 10V5M22.500 6.500L25 4l2.500 2.500" fill="none" stroke="#605800" />
            <path d="M39 1l4 1 6-1v7l-4 2-5-4zM43 9l-4 4h5" fill="#808080" />
            <path d="M57 5l4-4 4 4z" fill="#ff0000" />
            <path d="M57 9l4-4 4 4z" fill="#e8e800" />
            <path d="M57 13l4-4 4 4z" fill="#008000" />
            <path d="M74 2v6M74 10v2" stroke="#707070" strokeWidth="2" />
        </svg>
    </footer>;
}

function Tool({ label, children }: { label: string; children: ReactNode }) {
    return <button aria-label={label} className="flex h-[23px] w-full shrink-0 items-center justify-center">
        <svg viewBox="0 0 16 16" className="size-4" fill="none">{children}</svg>
    </button>;
}

function Frame({ stroke = "#3070e8" }: { stroke?: string }) {
    return <rect x="0.5" y="0.5" width="15" height="15" fill="#ffffff" stroke={stroke} />;
}

function TextTool({ children }: { children: ReactNode }) {
    return <button className="flex h-[23px] w-full shrink-0 items-center justify-center">
        <span className="flex h-4 w-4 items-center justify-center overflow-hidden border border-[#3070e8] bg-white text-[9px] leading-3 text-[#1040c0]">{children}</span>
    </button>;
}

function SideBar() {
    return <aside className="relative flex w-[25px] shrink-0 flex-col border-l-2 border-white bg-[#f0f0f0] pr-px text-[#003080]">
        <Tool label="后退"><path d="M1 8l6-5v3h8v4H7v3z" stroke="#2a70e0" fill="#ffffff" /></Tool>
        <Tool label="上一个"><path d="M8 1l6 7h-3v7H5V8H2z" stroke="#2a70e0" fill="#ffffff" /></Tool>
        <Tool label="下一个"><path d="M8 15l6-7h-3V1H5v7H2z" stroke="#2a70e0" fill="#ffffff" /></Tool>
        <Tool label="自选股">
            <Frame />
            <path d="M2 3h5M2 5.500h5M2 8h5" stroke="#008000" />
            <path d="M9 3h5M9 5.500h5" stroke="#ff0000" />
            <path d="M7 12l3-4 4-1-1 4-3 3-3 0z" fill="#e0e0e0" stroke="#707070" />
        </Tool>
        <Tool label="行情列表">
            <Frame />
            <path d="M2 4h3M2 6.500h3M2 9h3M2 11.500h3" stroke="#e00000" strokeWidth="1.5" />
            <path d="M6.500 4h3M6.500 6.500h3M6.500 9h3M6.500 11.500h3" stroke="#008000" strokeWidth="1.5" />
            <path d="M11 4h3M11 6.500h3M11 9h3M11 11.500h3" stroke="#0000d0" strokeWidth="1.5" />
        </Tool>
        <Tool label="分时图"><Frame /><path d="M1 11l3-2 2 1 3-4 2 1 4-4" stroke="#ff0000" /></Tool>
        <Tool label="K线图">
            <Frame />
            <path d="M3.500 4v8M12.500 1v8" stroke="#ff0000" />
            <path d="M2 6h3v4H2zM11 2h3v5h-3z" fill="#ff0000" />
            <path d="M8 3v11" stroke="#008000" />
            <path d="M6.500 5h3v6h-3z" fill="#008000" />
        </Tool>
        <Tool label="多窗口">
            <path d="M3.500 1.500h12v9h-12z" fill="#ffffff" stroke="#3070e8" />
            <path d="M0.500 4.500h12v10h-12z" fill="#ffffff" stroke="#3070e8" />
            <path d="M2 7.500h4M7 7.500h4M2 10h4M7 10h4M2 12.500h4M7 12.500h4" stroke="#505050" />
        </Tool>
        <TextTool>F10</TextTool>
        <Tool label="板块树">
            <Frame />
            <path d="M5 4v9h5M5 8h4" stroke="#6090e0" />
            <path d="M3 2h5v3H3zM9 6h5v3H9zM9 11h5v3H9z" fill="#ffc020" />
        </Tool>
        <Tool label="公告"><Frame stroke="#0080e0" /><path d="M4 4h8v9H4zM8 2v2" fill="#ff7840" stroke="#ff7840" /><path d="M5 6.500h6M5 9h6M5 11.500h6" stroke="#ffffff" /></Tool>
        <TextTool>F12</TextTool>
        <button className="flex h-[23px] w-full shrink-0 items-center justify-center">
            <span className="flex h-4 w-4 items-center justify-center rounded border border-[#008080] bg-white text-[9px] leading-3 text-[#1040c0] italic">f(x)</span>
        </button>
        <Tool label="圆圈"><Frame /><circle cx="8" cy="8" r="3.500" stroke="#0060c0" /></Tool>
        <hr className="my-[3px] h-px w-5 shrink-0 border-0 bg-[#a0a0a0]" />
        <Tool label="多曲线">
            <Frame />
            <path d="M2 6l3-2 2 2 3-2 2 1 2-2" stroke="#e02020" />
            <path d="M2 9l3-2 2 2 3-2 2 1 2-2" stroke="#3060e0" />
            <path d="M2 12l3-1 2 2 3-2 2 1 2-2" stroke="#e02020" />
        </Tool>
        <button className="h-[23px] w-full shrink-0 text-center text-[10px] font-bold text-[#2040d0]">RSI</button>
        <Tool label="资金"><path d="M12 5.500c-1-2-7-2-7 0.500s7 2 7 4.500-6 2.500-8 0M8 1v3M8 12v3" stroke="#c02828" strokeWidth="2" /></Tool>
        <Tool label="移动"><path d="M8 0l3 4H5zM8 16l3-4H5zM0 8l4-3v6zM16 8l-4-3v6zM5 7h6v2H5zM7 5h2v6H7z" fill="#1060d0" /></Tool>
        <Tool label="画笔"><path d="M1 15l2-4 3 2z" fill="#604020" /><path d="M3 12l7-7" stroke="#f0a020" strokeWidth="3" /><path d="M10 5l4-4" stroke="#603020" strokeWidth="4" /></Tool>
        <hr className="my-1 h-px w-5 shrink-0 border-0 bg-[#a0a0a0]" />
        <TextTool>F5</TextTool>
        <Tool label="刷新"><Frame /><path d="M4 8V5h6l1 2M12 8v3H6l-1-2" stroke="#50b840" strokeWidth="2" /></Tool>
        {side_periods.map((p) => (
            <button key={p} className={`h-[23px] w-full shrink-0 text-center ${p === "日" ? "border-t border-l border-[#a0a0a0] bg-[#fafafa]" : ""}`}>{p}</button>
        ))}
        <div className="absolute top-[419px] right-[2px] flex h-[57px] w-2 flex-col justify-end rounded-full bg-[#484848] px-px pb-[3px] opacity-90">
            <svg viewBox="0 0 6 18" className="h-[18px] w-[6px]"><path d="M0 1h6M0 4h6M0 7h6M0 10h6M0 13h6M0 16h6" stroke="#50d070" /></svg>
        </div>
    </aside>;
}

export default function App() {
    return <div className="flex min-h-screen w-full flex-col bg-[#f0f0f0] font-['Liberation_Sans','Noto_Sans_CJK_SC',sans-serif] text-[12px] leading-4">
        <TitleBar />
        <div className="flex flex-1">
            <main className="flex min-w-0 flex-1 flex-col border-t-2 border-[#707070] bg-[#0a0a0a] text-white">
                <PeriodBar />
                <CandleChart />
                <HoldingsChart />
                <MonthAxis />
                <BottomTabs />
                <StatusBar />
            </main>
            <SideBar />
        </div>
        <div className="h-[2px] bg-[#d0e0ea]" />
    </div>;
}
